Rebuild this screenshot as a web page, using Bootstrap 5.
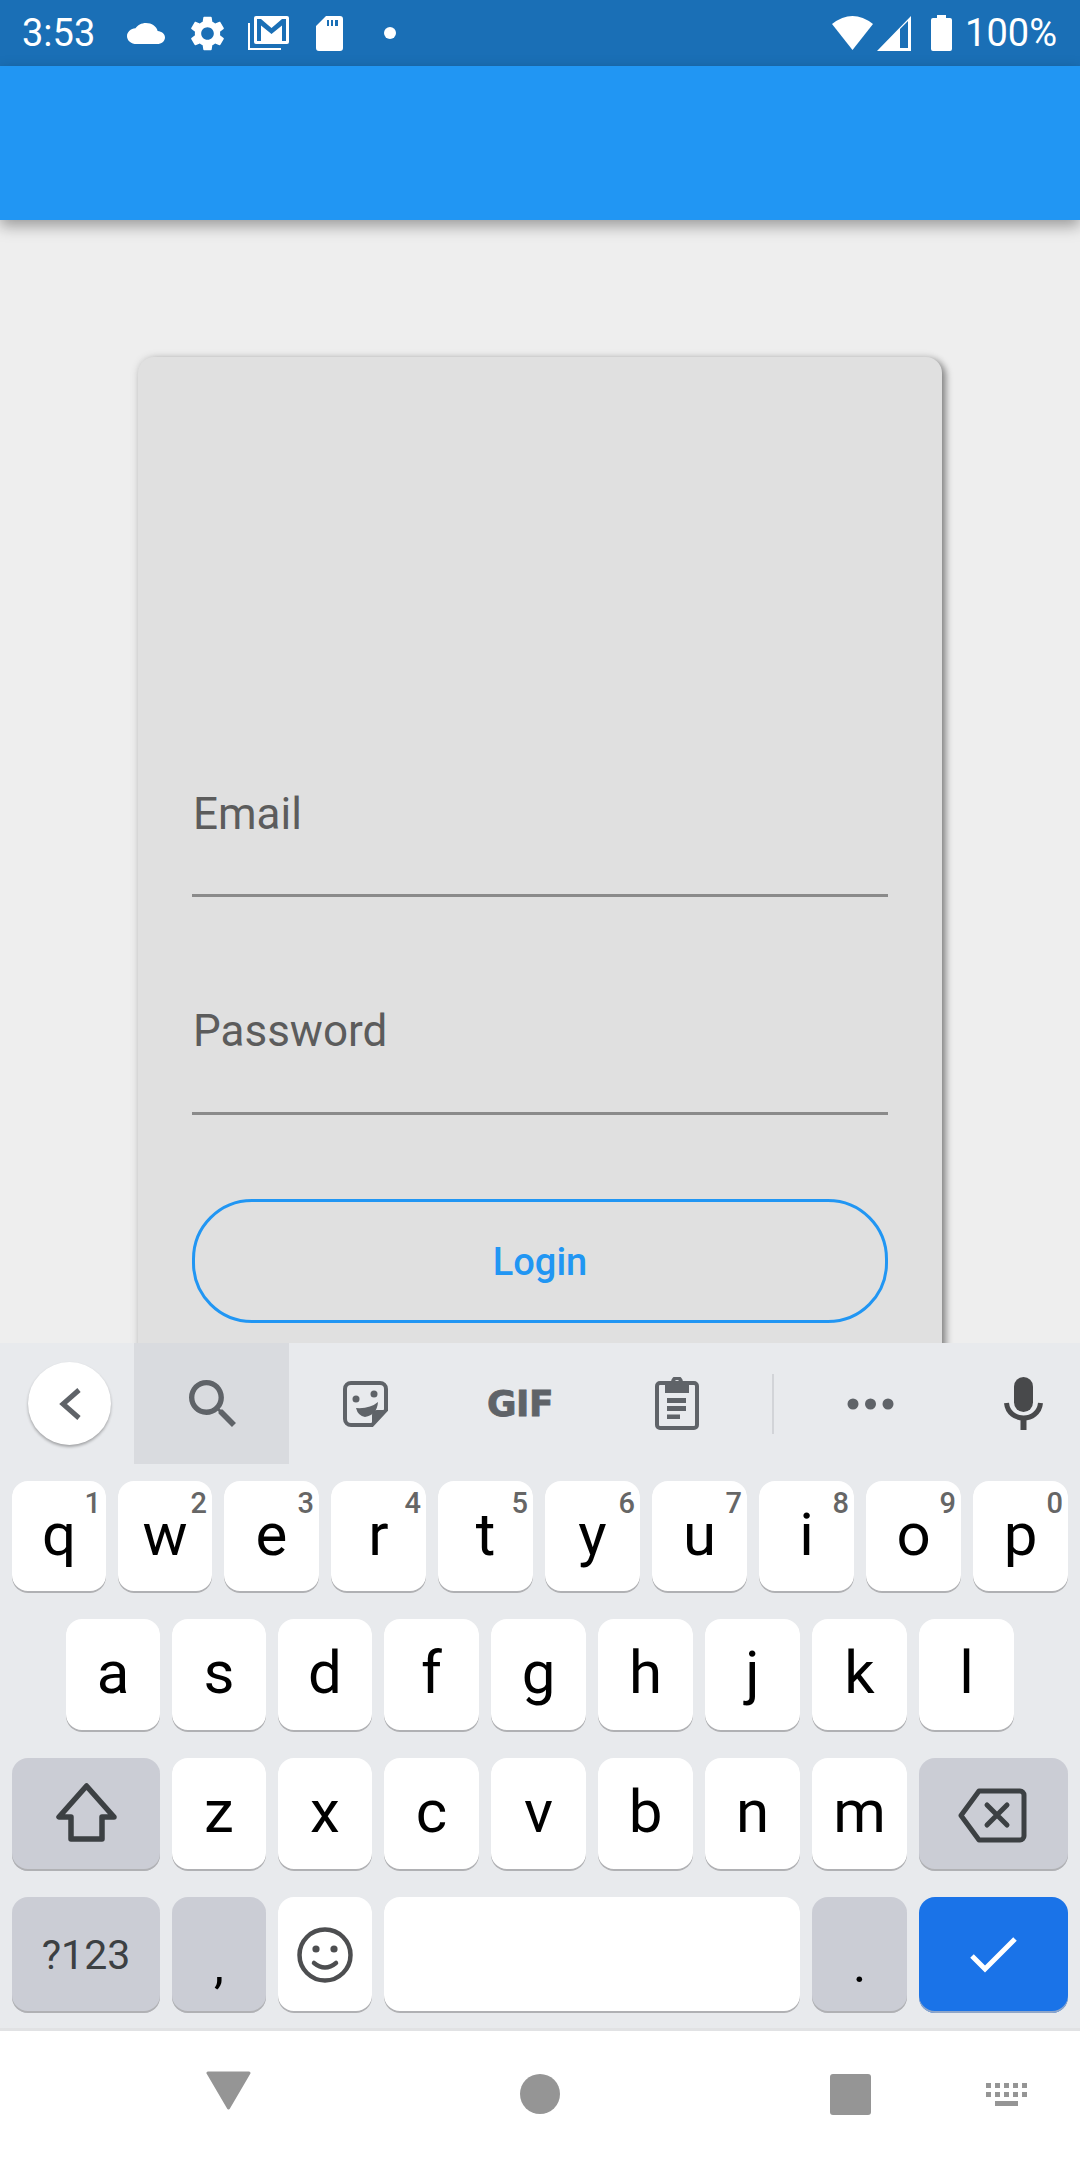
<!DOCTYPE html>
<html lang="en">
<head>
    <meta charset="UTF-8">
    <meta name="viewport" content="width=device-width, initial-scale=1.0">
    <title>Login</title>
    <link href="https://cdn.jsdelivr.net/npm/bootstrap@5.3.0/dist/css/bootstrap.min.css" rel="stylesheet">
    <style>
        body { width: 1080px; height: 2160px; overflow: hidden; background-color: #eeeeee; font-family: Roboto, "Liberation Sans", sans-serif; }
        svg { display: block; flex: none; }

        /* status bar */
        .status-bar { height: 66px; background-color: #1a6fb6; color: #fff; font-size: 38px; line-height: 66px; padding-left: 22px; }
        .status-bar svg { fill: #fff; }
        .ic-cloud { margin-left: 32px; }
        .ic-gear { margin-left: 26px; }
        .ic-gmail { margin-left: 24px; }
        .ic-sd { margin-left: 27px; }
        .ic-dot { margin-left: 41px; }
        .ic-wifi { margin-left: auto; }
        .ic-signal { margin-left: 4px; }
        .ic-battery { margin-left: 20px; }
        .status-pct { margin-left: 13px; margin-right: 23px; }

        .app-bar { height: 154px; background-color: #2196f3; box-shadow: 0 6px 14px rgba(0,0,0,.35); position: relative; z-index: 2; padding: 0; border-radius: 0; }

        /* login card */
        .page-area { height: 1123px; overflow: hidden; padding-top: 137px; }
        .login-card { width: 804px; height: 1100px; margin: 0 auto; background-color: #e0e0e0; border: 0; border-radius: 16px; padding: 431px 54px 0; box-shadow: 4px 3px 7px rgba(0,0,0,.4), 0 0 8px rgba(0,0,0,.12); }
        .field-label { display: block; margin: 0; font-size: 44px; line-height: 52px; color: #5c5c5c; padding-left: 1px; }
        .line-input { height: 57px; background: transparent; border: 0; border-bottom: 3px solid #8b8b8b; border-radius: 0; padding: 0; margin-bottom: 108px; }
        .pw-input { height: 58px; margin-bottom: 84px; }
        .login-btn { height: 124px; border: 3px solid #2196f3; border-radius: 60px; color: #2196f3; background: transparent; font-size: 38px; font-weight: 500; line-height: 1; padding: 2px 0 0; }

        /* keyboard */
        .kb { height: 685px; background-color: #e8eaed; }
        .kb-strip { height: 121px; padding-left: 28px; color: #5f6368; }
        .strip-back { width: 83px; height: 83px; border-radius: 50%; background: #fff; box-shadow: 0 2px 3px rgba(0,0,0,.3); margin-right: 23px; }
        .strip-slot { width: 154px; height: 121px; }
        .strip-slot.is-active { width: 155px; background-color: #d9dbdf; }
        .strip-search { margin-left: 2px; }
        .strip-clip { margin-left: 6px; }
        .strip-gif { font-family: "DejaVu Sans", sans-serif; font-weight: 700; font-size: 36px; line-height: 1; letter-spacing: -.5px; -webkit-text-stroke: .8px #5f6368; }
        .strip-divider { width: 2px; height: 60px; background-color: #d2d4d8; margin-left: 21px; }
        .strip-dots { width: 192px; height: 121px; }
        .strip-mic { width: 114px; height: 121px; }
        .kb-row { display: grid; column-gap: 12px; padding: 0 12px; margin-bottom: 26px; height: 113px; }
        .kb-row-1 { margin-top: 17px; height: 112px; grid-template-columns: 94px 94px repeat(8, 95px); }
        .kb-row-2 { padding: 0 66px; grid-template-columns: repeat(3, 94px) repeat(6, 95px); }
        .kb-row-3 { grid-template-columns: 148px 94px 94px repeat(5, 95px) 149px; }
        .kb-row-4 { height: 116px; margin-bottom: 0; grid-template-columns: 148px 94px 94px 416px 95px 149px; }
        .kb-key { position: relative; display: flex; justify-content: center; background: #fff; border-radius: 16px; box-shadow: inset 0 -2px 0 #b0b1b4; color: #000; font-size: 60px; line-height: 60px; padding-top: 24px; }
        .kb-key.is-fn { background-color: #cbcdd5; }
        .kb-key.is-enter { background-color: #1a73e8; box-shadow: inset 0 -2px 0 #8fa6c9; }
        .kb-key.is-icon { padding-top: 0; align-items: center; }
        .kb-key.is-sym { font-size: 41px; color: #3c4043; padding-top: 36px; line-height: 44px; }
        .kb-key.is-punct { font-size: 50px; padding-top: 38px; }
        .kb-key .hint { position: absolute; top: 8px; right: 5px; font-size: 29px; line-height: 28px; font-weight: 500; color: #666; }
        .shift-glyph { margin-bottom: 3px; }
        .back-glyph { margin: 2px 2px 0 0; }

        /* nav bar */
        .nav-bar { height: 132px; background-color: #fff; border-top: 3px solid #e1e2e4; padding-left: 206px; fill: #959595; }
        .nb-back { margin-top: 40px; }
        .nb-home { margin: 43px 0 0 269px; }
        .nb-recent { margin: 43px 0 0 270px; }
        .nb-kbd { margin: 52px 0 0 114px; }
    </style>
</head>
<body>
    <!-- status bar -->
    <div class="status-bar d-flex align-items-center">
        <span>3:53</span>
        <svg class="ic-cloud" width="38" height="21" viewBox="0 4 24 16" preserveAspectRatio="none"><path d="M19.35 10.04C18.67 6.59 15.64 4 12 4 9.11 4 6.6 5.64 5.35 8.04 2.34 8.36 0 10.91 0 14c0 3.31 2.69 6 6 6h13c2.76 0 5-2.24 5-5 0-2.64-2.05-4.78-4.65-4.96z"/></svg>
        <svg class="ic-gear" width="33" height="35" viewBox="2.6 2 18.8 20" preserveAspectRatio="none"><path d="M19.14 12.94c.04-.3.06-.61.06-.94 0-.32-.02-.64-.07-.94l2.03-1.58c.18-.14.23-.41.12-.61l-1.92-3.32c-.12-.22-.37-.29-.59-.22l-2.39.96c-.5-.38-1.03-.7-1.62-.94l-.36-2.54c-.04-.24-.24-.41-.48-.41h-3.84c-.24 0-.43.17-.47.41l-.36 2.54c-.59.24-1.13.57-1.62.94l-2.39-.96c-.22-.08-.47 0-.59.22L2.74 8.87c-.12.21-.08.47.12.61l2.03 1.58c-.05.3-.09.63-.09.94s.02.64.07.94l-2.03 1.58c-.18.14-.23.41-.12.61l1.92 3.32c.12.22.37.29.59.22l2.39-.96c.5.38 1.03.7 1.62.94l.36 2.54c.05.24.24.41.48.41h3.84c.24 0 .44-.17.47-.41l.36-2.54c.59-.24 1.13-.56 1.62-.94l2.39.96c.22.08.47 0 .59-.22l1.92-3.32c.12-.22.07-.47-.12-.61l-2.01-1.58zM12 15.6c-1.98 0-3.6-1.62-3.6-3.6s1.62-3.6 3.6-3.6 3.6 1.62 3.6 3.6-1.62 3.6-3.6 3.6z"/></svg>
        <svg class="ic-gmail" width="41" height="34" viewBox="0 0 41 34"><path d="M0 7h2v25h31v2H0z"/><path fill-rule="evenodd" d="M8 0h31a2 2 0 0 1 2 2v24a2 2 0 0 1-2 2H8a2 2 0 0 1-2-2V2a2 2 0 0 1 2-2zM9 3v22h4V9.500L23.500 18 34 9.500V25h4V3h-4L23.500 12 13 3z"/></svg>
        <svg class="ic-sd" width="27" height="35" viewBox="0 0 27 35"><path fill-rule="evenodd" d="M10 0h14a3 3 0 0 1 3 3v29a3 3 0 0 1-3 3H3a3 3 0 0 1-3-3V10zM11 4v6h2V4zm4 0v6h2V4zm4 0v6h3V4z"/></svg>
        <svg class="ic-dot" width="12" height="12" viewBox="0 0 12 12"><circle cx="6" cy="6" r="6"/></svg>
        <svg class="ic-wifi" width="41" height="34" viewBox="0 0 41 34"><path d="M20.5 34L0 8Q20.5-8 41 8z"/></svg>
        <svg class="ic-signal" width="34" height="35" viewBox="0 0 34 35"><path fill-rule="evenodd" d="M0 35L34 0v35zM23 32h8V5l-8 8z"/></svg>
        <svg class="ic-battery" width="21" height="36" viewBox="0 0 21 36"><path d="M6 3V0h9v3h4a2 2 0 0 1 2 2v29a2 2 0 0 1-2 2H2a2 2 0 0 1-2-2V5a2 2 0 0 1 2-2z"/></svg>
        <span class="status-pct">100%</span>
    </div>

    <nav class="navbar app-bar"></nav>

    <main class="page-area">
        <div class="card login-card">
            <form>
                <label class="form-label field-label" for="email">Email</label>
                <input class="form-control line-input" id="email" type="email">
                <label class="form-label field-label" for="password">Password</label>
                <input class="form-control line-input pw-input" id="password" type="password">
                <button class="btn w-100 login-btn" type="button">Login</button>
            </form>
        </div>
    </main>

    <!-- keyboard -->
    <div class="kb">
        <div class="kb-strip d-flex align-items-center">
            <div class="strip-back d-flex align-items-center justify-content-center">
                <svg width="22" height="34" viewBox="0 0 22 34" fill="none" stroke="#5f6368" stroke-width="5"><path d="M20 3L4 17l16 14"/></svg>
            </div>
            <div class="strip-slot is-active d-flex align-items-center justify-content-center">
                <svg class="strip-search" width="47" height="47" viewBox="3 3 17.5 17.5" fill="#5f6368"><path d="M15.5 14h-.79l-.28-.27C15.41 12.59 16 11.11 16 9.5 16 5.91 13.09 3 9.5 3S3 5.91 3 9.5 5.91 16 9.5 16c1.61 0 3.09-.59 4.23-1.57l.27.28v.79l5 4.99L20.49 19l-4.99-5zm-6 0C7.01 14 5 11.99 5 9.5S7.01 5 9.5 5 14 7.01 14 9.5 11.99 14 9.5 14z"/></svg>
            </div>
            <div class="strip-slot d-flex align-items-center justify-content-center">
                <svg width="46" height="46" viewBox="0 0 46 46" fill="#5f6368"><path fill="none" stroke="#5f6368" stroke-width="4" d="M8 2h29a6 6 0 0 1 6 6v21L29 44H8a6 6 0 0 1-6-6V8a6 6 0 0 1 6-6z"/><path d="M43 29h-9a5 5 0 0 0-5 5v10z"/><circle cx="13" cy="18" r="3.5"/><circle cx="31" cy="13" r="3.5"/><path d="M13 27q14 1 22-6-1 13-13 15-7-1-9-9z"/></svg>
            </div>
            <div class="strip-slot d-flex align-items-center justify-content-center">
                <span class="strip-gif">GIF</span>
            </div>
            <div class="strip-slot d-flex align-items-center justify-content-center">
                <svg class="strip-clip" width="44" height="53" viewBox="0 0 44 53" fill="#5f6368"><rect x="2" y="6" width="40" height="45" rx="3" fill="none" stroke="#5f6368" stroke-width="4"/><path fill-rule="evenodd" d="M10 5h6a6 6 0 0 1 12 0h6v11H10zM22 3a2.5 2.5 0 1 0 0 5 2.5 2.5 0 0 0 0-5z"/><path d="M12 21h19v5H12zM12 29h19v5H12zM12 37.500h13v4.500H12z"/></svg>
            </div>
            <div class="strip-divider"></div>
            <div class="strip-dots d-flex align-items-center justify-content-center">
                <svg width="47" height="12" viewBox="0 0 47 12" fill="#5f6368"><circle cx="6" cy="6" r="5.500"/><circle cx="23.500" cy="6" r="5.500"/><circle cx="41" cy="6" r="5.500"/></svg>
            </div>
            <div class="strip-mic d-flex align-items-center justify-content-center">
                <svg width="39" height="53" viewBox="0 0 39 53" fill="#48494b"><rect x="10" y="0" width="19" height="35" rx="9.500"/><path fill="none" stroke="#48494b" stroke-width="5" d="M2.500 26c2 20 32 20 34 0"/><path d="M16.500 40h6v13h-6z"/></svg>
            </div>
        </div>

        <div class="kb-row kb-row-1">
            <div class="kb-key">q<span class="hint">1</span></div>
            <div class="kb-key">w<span class="hint">2</span></div>
            <div class="kb-key">e<span class="hint">3</span></div>
            <div class="kb-key">r<span class="hint">4</span></div>
            <div class="kb-key">t<span class="hint">5</span></div>
            <div class="kb-key">y<span class="hint">6</span></div>
            <div class="kb-key">u<span class="hint">7</span></div>
            <div class="kb-key">i<span class="hint">8</span></div>
            <div class="kb-key">o<span class="hint">9</span></div>
            <div class="kb-key">p<span class="hint">0</span></div>
        </div>
        <div class="kb-row kb-row-2">
            <div class="kb-key">a</div>
            <div class="kb-key">s</div>
            <div class="kb-key">d</div>
            <div class="kb-key">f</div>
            <div class="kb-key">g</div>
            <div class="kb-key">h</div>
            <div class="kb-key">j</div>
            <div class="kb-key">k</div>
            <div class="kb-key">l</div>
        </div>
        <div class="kb-row kb-row-3">
            <div class="kb-key is-fn is-icon">
                <svg class="shift-glyph" width="61" height="60" viewBox="0 0 61 60" fill="none" stroke="#3c4043" stroke-width="5.500" stroke-linejoin="round"><path d="M30.500 3L3 34h12v22h31V34h12z"/></svg>
            </div>
            <div class="kb-key">z</div>
            <div class="kb-key">x</div>
            <div class="kb-key">c</div>
            <div class="kb-key">v</div>
            <div class="kb-key">b</div>
            <div class="kb-key">n</div>
            <div class="kb-key">m</div>
            <div class="kb-key is-fn is-icon">
                <svg class="back-glyph" width="69" height="55" viewBox="0 0 69 55" fill="none" stroke="#3c4043" stroke-width="5" stroke-linejoin="round" stroke-linecap="round"><path d="M21 3h41a4 4 0 0 1 4 4v41a4 4 0 0 1-4 4H21L3 27.500z"/><path d="M29 17l20 20M49 17L29 37"/></svg>
            </div>
        </div>
        <div class="kb-row kb-row-4">
            <div class="kb-key is-fn is-sym">?123</div>
            <div class="kb-key is-fn is-punct">,</div>
            <div class="kb-key is-icon">
                <svg width="56" height="56" viewBox="0 0 56 56" fill="none" stroke="#4d4e50" stroke-width="4.500" stroke-linecap="round"><circle cx="28" cy="28" r="25.500"/><path d="M17 36q11 9 22 0"/><circle cx="19" cy="22" r="3.600" fill="#4d4e50" stroke="none"/><circle cx="37" cy="22" r="3.600" fill="#4d4e50" stroke="none"/></svg>
            </div>
            <div class="kb-key"></div>
            <div class="kb-key is-fn is-punct">.</div>
            <div class="kb-key is-enter is-icon">
                <svg width="48" height="36" viewBox="0 0 48 36" fill="none" stroke="#fff" stroke-width="5"><path d="M2 19l13 13L45 2"/></svg>
            </div>
        </div>
    </div>

    <!-- nav bar -->
    <div class="nav-bar d-flex align-items-start">
        <svg class="nb-back" width="45" height="39" viewBox="0 0 45 39"><path stroke="#959595" stroke-width="3" stroke-linejoin="round" d="M2 2h41L22.500 37z"/></svg>
        <svg class="nb-home" width="40" height="40" viewBox="0 0 40 40"><circle cx="20" cy="20" r="20"/></svg>
        <svg class="nb-recent" width="41" height="41" viewBox="0 0 41 41"><rect width="41" height="41" rx="3"/></svg>
        <svg class="nb-kbd" width="43" height="23" viewBox="0 0 43 23"><path d="M1 0h5v5H1zM10 0h5v5h-5zM19 0h5v5h-5zM28 0h5v5h-5zM37 0h5v5h-5zM1 9h5v5H1zM10 9h5v5h-5zM19 9h5v5h-5zM28 9h5v5h-5zM37 9h5v5h-5zM10 18h23v5H10z"/></svg>
    </div>

    <script src="https://cdn.jsdelivr.net/npm/bootstrap@5.3.0/dist/js/bootstrap.bundle.min.js"></script>
</body>
</html>
